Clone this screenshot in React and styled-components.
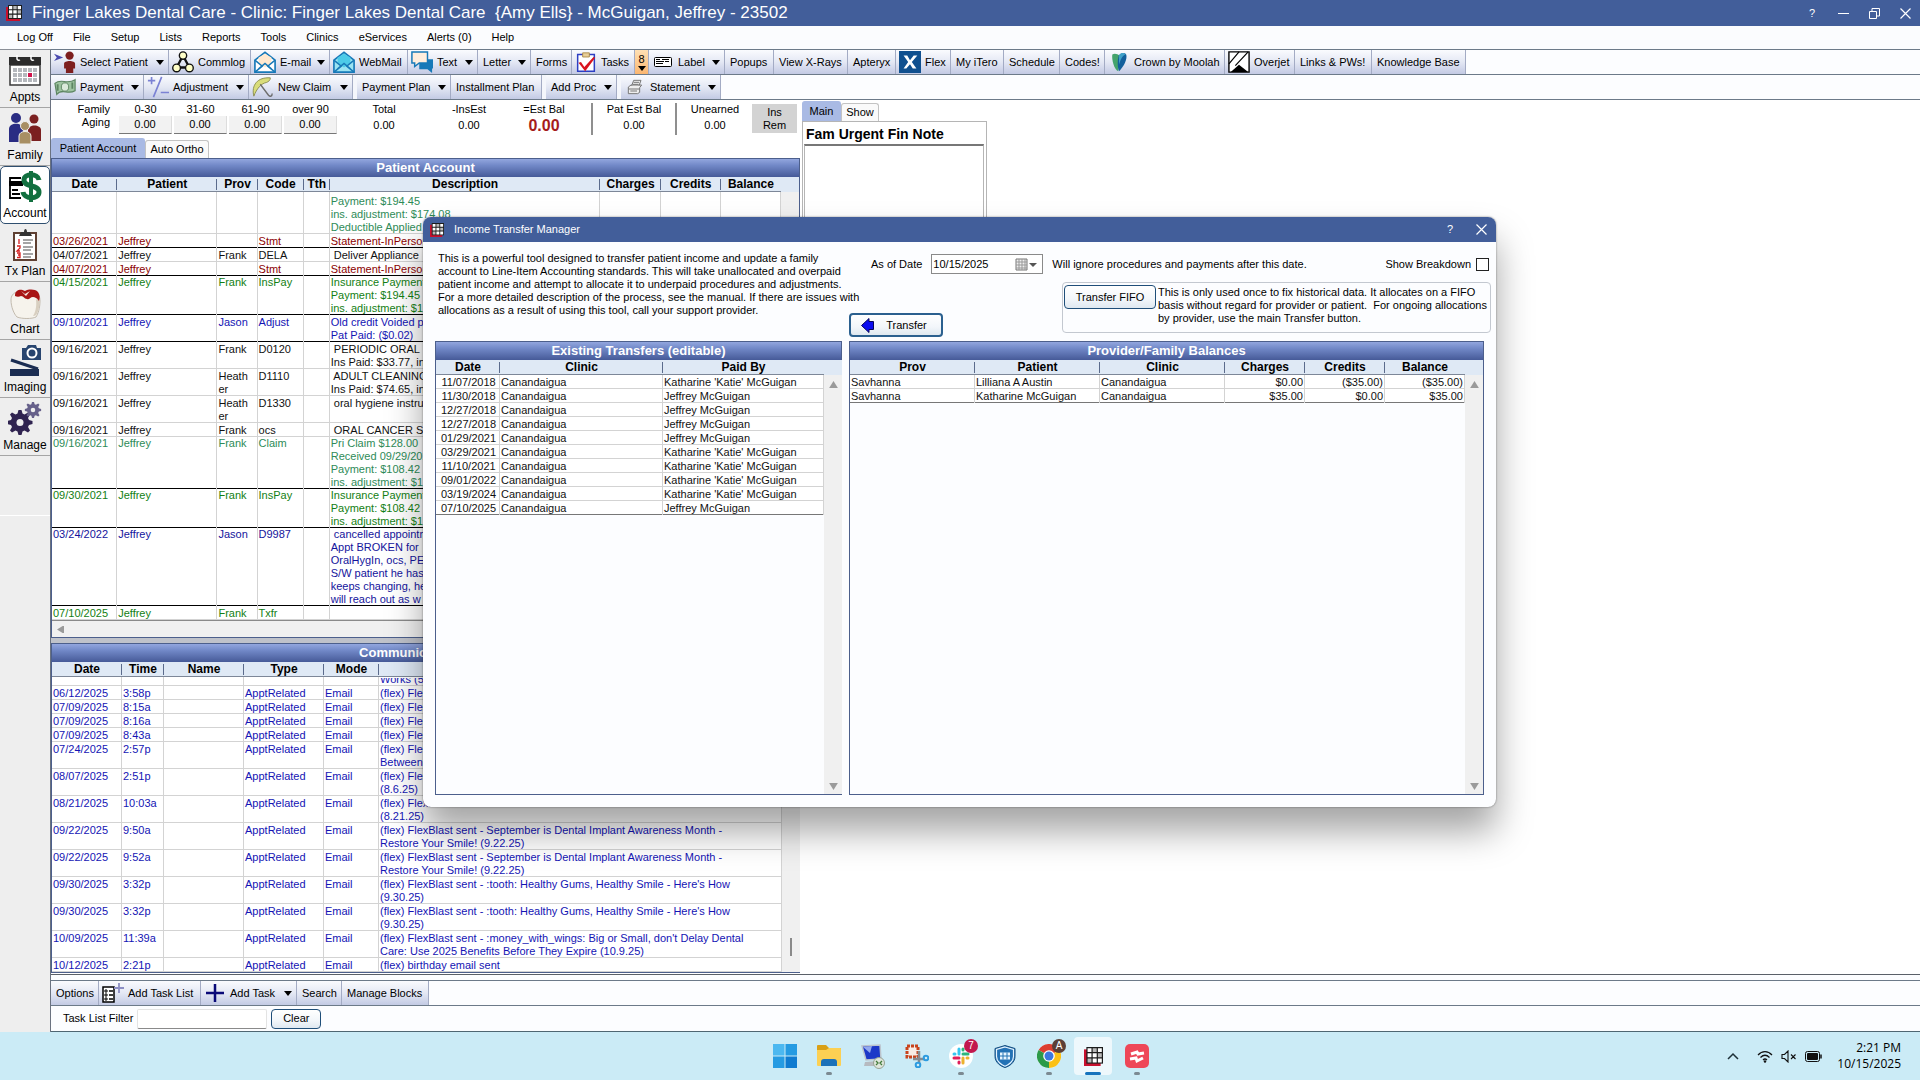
import React from "react";
import styled, { createGlobalStyle } from "styled-components";

const menuItems = [
  "Log Off",
  "File",
  "Setup",
  "Lists",
  "Reports",
  "Tools",
  "Clinics",
  "eServices",
  "Alerts (0)",
  "Help",
];

const DARK_RED = "#8b0000";
const GREEN = "#138013";
const SEA_GREEN = "#2e8b57";
const BLUE = "#1414b4";
const NAVY = "#14149c";

const accountColumns = [
  ["Date", 65],
  ["Patient", 100],
  ["Prov", 40],
  ["Code", 46],
  ["Tth", 26],
  ["Description", 270],
  ["Charges", 60],
  ["Credits", 60],
  ["Balance", 60],
];

const accountRows = [
  { date: "03/26/2021", code: "Stmt", text: ["Statement-InPerson"], color: DARK_RED, last: true },
  { date: "04/07/2021", prov: "Frank", code: "DELA", text: [" Deliver Appliance"] },
  { date: "04/07/2021", code: "Stmt", text: ["Statement-InPerson"], color: DARK_RED, last: true },
  {
    date: "04/15/2021",
    prov: "Frank",
    code: "InsPay",
    text: ["Insurance Payment", "Payment: $194.45", "ins. adjustment: $174.08"],
    color: GREEN,
    last: true,
  },
  {
    date: "09/10/2021",
    prov: "Jason",
    code: "Adjust",
    text: ["Old credit Voided p", "Pat Paid: ($0.02)"],
    color: BLUE,
    last: true,
  },
  { date: "09/16/2021", prov: "Frank", code: "D0120", text: [" PERIODIC ORAL", "Ins Paid: $33.77, ins"] },
  { date: "09/16/2021", prov: "Heather", code: "D1110", text: [" ADULT CLEANING", "Ins Paid: $74.65, ins"] },
  { date: "09/16/2021", prov: "Heather", code: "D1330", text: [" oral hygiene instructions", ""] },
  { date: "09/16/2021", prov: "Frank", code: "ocs", text: [" ORAL CANCER S"] },
  {
    date: "09/16/2021",
    prov: "Frank",
    code: "Claim",
    text: ["Pri Claim $128.00", "Received 09/29/2021", "Payment: $108.42", "ins. adjustment: $19"],
    color: SEA_GREEN,
    last: true,
  },
  {
    date: "09/30/2021",
    prov: "Frank",
    code: "InsPay",
    text: ["Insurance Payment", "Payment: $108.42", "ins. adjustment: $19"],
    color: GREEN,
    last: true,
  },
  {
    date: "03/24/2022",
    prov: "Jason",
    code: "D9987",
    text: [
      " cancelled appointment",
      "Appt BROKEN for",
      "OralHygIn, ocs, PE",
      "S/W patient he has",
      "keeps changing, he",
      "will reach out as w",
    ],
    color: NAVY,
    last: true,
  },
  { date: "07/10/2025", prov: "Frank", code: "Txfr", text: [""], color: GREEN },
];

const commColumns = [
  ["Date", 70],
  ["Time", 42],
  ["Name", 80],
  ["Type", 80],
  ["Mode", 55],
  ["", 403],
];

const commRows = [
  ["06/12/2025", "3:58p", ["(flex) FlexBlast sent"]],
  ["07/09/2025", "8:15a", ["(flex) FlexBlast sent"]],
  ["07/09/2025", "8:16a", ["(flex) FlexBlast sent"]],
  ["07/09/2025", "8:43a", ["(flex) FlexBlast sent"]],
  ["07/24/2025", "2:57p", ["(flex) FlexBlast sent", "Between"]],
  ["08/07/2025", "2:51p", ["(flex) FlexBlast sent", "(8.6.25)"]],
  ["08/21/2025", "10:03a", ["(flex) FlexBlast sent", "(8.21.25)"]],
  ["09/22/2025", "9:50a", ["(flex) FlexBlast sent - September is Dental Implant Awareness Month -", "Restore Your Smile! (9.22.25)"]],
  ["09/22/2025", "9:52a", ["(flex) FlexBlast sent - September is Dental Implant Awareness Month -", "Restore Your Smile! (9.22.25)"]],
  ["09/30/2025", "3:32p", ["(flex) FlexBlast sent - :tooth: Healthy Gums, Healthy Smile - Here's How", "(9.30.25)"]],
  ["09/30/2025", "3:32p", ["(flex) FlexBlast sent - :tooth: Healthy Gums, Healthy Smile - Here's How", "(9.30.25)"]],
  ["10/09/2025", "11:39a", ["(flex) FlexBlast sent - :money_with_wings: Big or Small, don't Delay Dental", "Care: Use 2025 Benefits Before They Expire (10.9.25)"]],
  ["10/12/2025", "2:21p", ["(flex) birthday email sent"]],
];

const transferColumns = [
  ["Date", 64],
  ["Clinic", 163],
  ["Paid By", 161],
];

const KATIE = "Katharine 'Katie' McGuigan";
const JEFFREY = "Jeffrey McGuigan";

const transferRows = [
  ["11/07/2018", KATIE],
  ["11/30/2018", JEFFREY],
  ["12/27/2018", JEFFREY],
  ["12/27/2018", JEFFREY],
  ["01/29/2021", JEFFREY],
  ["03/29/2021", KATIE],
  ["11/10/2021", KATIE],
  ["09/01/2022", KATIE],
  ["03/19/2024", KATIE],
  ["07/10/2025", JEFFREY],
];

const balanceColumns = [
  ["Prov", 125],
  ["Patient", 125],
  ["Clinic", 125],
  ["Charges", 80],
  ["Credits", 80],
  ["Balance", 80],
];

const balanceRows = [
  ["Savhanna", "Lilliana A Austin", "Canandaigua", "$0.00", "($35.00)", "($35.00)"],
  ["Savhanna", "Katharine McGuigan", "Canandaigua", "$35.00", "$0.00", "$35.00"],
];

/* ---------- icons ---------- */

const Svg = ({ w = 22, h = 22, box = "0 0 24 24", children }) => (
  <svg width={w} height={h} viewBox={box} fill="none" aria-hidden="true">
    {children}
  </svg>
);

const LogoIcon = ({ size = 16 }) => (
  <Svg w={size} h={size} box="0 0 16 16">
    <path d="M0 2h14v14H0z" fill="#c8102e" />
    <path d="M2 0h14v14H2z" fill="#1c1c1c" />
    <path d="M3 1h3.300v3.300H3zM11.700 1H15v3.300h-3.300zM3 5.300h3.300v3.300H3zM7.300 5.300h3.400v3.300H7.300zM11.700 9.700H15V13h-3.300zM7.300 9.700h3.400V13H7.300z" fill="#fff" />
    <path d="M7.300 1h3.400v3.300H7.300zM11.700 5.300H15v3.300h-3.300zM3 9.700h3.300V13H3z" fill="#b9b9b9" />
  </Svg>
);

const CaretIcon = () => (
  <Svg w={8} h={5} box="0 0 8 5">
    <path d="M0 0h8L4 5z" fill="#000" />
  </Svg>
);

const SelectPatientIcon = () => (
  <Svg>
    <path d="M0 3l10 4-10 4 3-4z" fill="#4a4ab0" />
    <circle cx="17" cy="5" r="4.500" fill="#7d1f1f" />
    <path d="M11 14c0-4 12-4 12 0v5h-2v5h-8v-5h-2z" fill="#7d1f1f" />
  </Svg>
);

const CommlogIcon = () => (
  <Svg>
    <path d="M12 5L5 18h14z" stroke="#111" strokeWidth="2.500" />
    <circle cx="12" cy="5" r="4" fill="#ffffc8" stroke="#111" strokeWidth="1.500" />
    <circle cx="5" cy="18.500" r="4.200" fill="#ffffc8" stroke="#111" strokeWidth="1.500" />
    <circle cx="19" cy="18.500" r="4.200" fill="#ffffc8" stroke="#111" strokeWidth="1.500" />
  </Svg>
);

const EnvelopeIcon = ({ fill = "#ffe9cf", back = "#fff" }) => (
  <Svg>
    <path d="M1 10L12 1.500 23 10v13H1z" fill={back} stroke="#1779b8" strokeWidth="1.800" />
    <path d="M5 7l7-4 7 4v6l-7 5-7-5z" fill={fill} />
    <path d="M1 10l8 6.500L1 23M23 10l-8 6.500 8 6.500M5 19.500l7-6 7 6" stroke="#1779b8" strokeWidth="1.600" />
  </Svg>
);

const TextIcon = () => (
  <Svg>
    <path d="M9 9h15v10h-1v5l-5-4H9z" fill="#1779b8" />
    <path d="M1 1h17v12H9l-5 4v-4H1z" fill="#ffeedd" stroke="#1779b8" strokeWidth="1.600" />
  </Svg>
);

const TasksIcon = () => (
  <Svg w={20}>
    <path d="M2 3h20v20H2z" fill="#fff" stroke="#2d3fc4" strokeWidth="1.800" />
    <path d="M8 1h8v5H8z" fill="#e8cf9a" stroke="#a5823c" />
    <path d="M3 13l3-1 4 6L21 6l2 1-12 16z" fill="#d9141e" />
  </Svg>
);

const LabelIcon = () => (
  <Svg w={18} h={10} box="0 0 18 10">
    <rect x="0.500" y="0.500" width="17" height="9" rx="1" fill="#fff" stroke="#000" />
    <path d="M2 2.500h4M8 2.500h7M2 4.500h8M11 4.500h4M2 6.500h7" stroke="#000" />
  </Svg>
);

const FlexIcon = () => (
  <Svg>
    <path d="M0 0h24v24H0z" fill="#10508f" />
    <path d="M5 5h4l3 5 4-5h4l-6 7 5 7h-4l-3-4.500L8 19H5l5-7z" fill="#fff" />
  </Svg>
);

const CrownIcon = () => (
  <Svg w={20}>
    <path d="M4 3c3-2 7 0 8 1 0 8 0 13-1 19-5-2-8-14-7-20z" fill="#44a36c" />
    <path d="M12 4c3-4 9-4 9 1 0 7-5 14-9 18-2-5-2-14 0-19z" fill="#125f9c" />
    <path d="M12 4c3-4 7-3 8-1-4 1-6 6-8 12z" fill="#3fa0c8" />
  </Svg>
);

const OverjetIcon = () => (
  <Svg>
    <path d="M1 1h22v22H1z" fill="#fff" stroke="#000" strokeWidth="1.500" />
    <path d="M1 14L12 1M8 16L22 1" stroke="#000" strokeWidth="1.300" />
    <path d="M3 23l9-8 10 8z" fill="#000" />
  </Svg>
);

const MoneyIcon = () => (
  <Svg>
    <path d="M1 8c7-6 13 2 22-4v12c-8 5-14-3-20 4z" fill="#9dc3a0" stroke="#5c8561" strokeWidth="1.300" />
    <ellipse cx="12" cy="12" rx="4" ry="4.500" fill="#dbeadb" stroke="#5c8561" />
    <path d="M4 9v7M20 7v7" stroke="#5c8561" strokeWidth="2" />
  </Svg>
);

const PlusMinusIcon = () => (
  <Svg>
    <path d="M1 5h8M5 1v8M16 1L7 23M15 18h9" stroke="#7b82d4" strokeWidth="1.800" />
  </Svg>
);

const UmbrellaIcon = () => (
  <Svg>
    <path d="M2 22C-1 10 6 1 20 2c0 3-2 4-4 5-6 1-11 7-14 15z" fill="#d9dd7a" stroke="#8a8c50" />
    <path d="M9 9l9 12c2 2 4 1 4-2" stroke="#6d6d6d" strokeWidth="1.500" />
  </Svg>
);

const PrinterIcon = () => (
  <Svg w={18} h={16}>
    <path d="M7 10l3-8h11l-3 8M2 12l4-3h16l-3 4v7l-3 2H2z" fill="#eee" stroke="#777" strokeWidth="1.500" />
    <path d="M10 5h8M9 8h8M2 15h17M5 18h10" stroke="#777" strokeWidth="1.500" />
  </Svg>
);

const TaskListIcon = () => (
  <Svg w={22} h={20} box="0 0 22 20">
    <path d="M1 4h11v15H1z" fill="#fff" stroke="#000" strokeWidth="1.500" />
    <path d="M3 7h2v2H3zM3 11h2v2H3zM3 15h2v2H3z" stroke="#000" />
    <path d="M7 8h4M7 12h4M7 16h4" stroke="#000" strokeWidth="1.300" />
    <path d="M12 5h10M17 0v10" stroke="#8d8fc4" strokeWidth="1.800" />
  </Svg>
);

const AddIcon = () => (
  <Svg w={18} h={18} box="0 0 18 18">
    <path d="M0 9h18M9 0v18" stroke="#0a0a78" strokeWidth="2.500" />
  </Svg>
);

const ApptsIcon = () => (
  <Svg w={34} h={34} box="0 0 34 34">
    <path d="M2 11h30v20H2z" fill="#fff" stroke="#3a3a3a" strokeWidth="1.500" />
    <path d="M1 3h32v8H1z" fill="#2b2b2b" />
    <path d="M9 1v4a2 2 0 003 1M23 1v4a2 2 0 003 1" stroke="#fff" strokeWidth="1.500" />
    {[14, 19, 24].map((y) =>
      [5, 10, 15, 20, 25].map((x) => (
        <path key={`${x}-${y}`} d={`M${x} ${y}h4v4h-4z`} fill={x === 20 && y === 19 ? "#d1124b" : "#b5b8bd"} />
      ))
    )}
  </Svg>
);

const FamilyIcon = () => (
  <Svg w={34} h={34} box="0 0 34 34">
    <circle cx="8" cy="6" r="5" fill="#2a2c83" />
    <path d="M1 30V17c0-7 14-7 14 0v13z" fill="#2a2c83" />
    <circle cx="26" cy="7" r="4.500" fill="#7b2020" />
    <path d="M20 29V18c0-6 13-6 13 0v11z" fill="#7b2020" />
    <circle cx="17" cy="14" r="4.500" fill="#a88f63" stroke="#eee" />
    <path d="M11 32v-8c0-6 12-6 12 0v8z" fill="#a88f63" stroke="#eee" />
  </Svg>
);

const AccountIcon = () => (
  <Svg w={34} h={34} box="0 0 34 34">
    <path d="M1 11h14v5H1z" fill="#000" />
    <path d="M13 8H2v20h11M4 20h6M4 24h8" stroke="#000" strokeWidth="1.800" />
    <path d="M31 10c-1-7-15-7-15 0 0 8 15 4 15 12 0 8-15 7-16 0" stroke="#11703f" strokeWidth="5" />
    <path d="M23 1v31" stroke="#11703f" strokeWidth="4" />
  </Svg>
);

const TxPlanIcon = () => (
  <Svg w={34} h={34} box="0 0 34 34">
    <path d="M6 5h22v27H6z" fill="#fff" stroke="#5f4032" strokeWidth="2" />
    <path d="M11 8l2-4h3c0-4 3-4 3 0h3l2 4z" fill="#333" />
    <path d="M15 12h10M15 15h8M15 19h10M15 22h8M15 26h10M15 29h8" stroke="#888" strokeWidth="1.500" />
    <path d="M11 11v5M9 18h3v2l-3 3h3M9 25h3v4.500H9M10 27h2" stroke="#d61c1c" strokeWidth="1.300" />
  </Svg>
);

const ChartIcon = () => (
  <Svg w={34} h={34} box="0 0 34 34">
    <path d="M3 14c0-4 2-7 6-8h18c4 2 5 5 5 9 0 7-2 13-4 16-4 2-14 2-19 0-3-3-6-10-6-17z" fill="#f6f3ec" stroke="#c3bbae" />
    <path d="M28 14c1 7-1 13-3 16 3 0 4-2 5-5 2-5 2-10 1-14z" fill="#d8cfc0" />
    <path d="M9 5c3-2 5-1 8 0 4-2 10-2 13 1 2 3 2 6 1 9-2-3-4-4-6-4-3 0-3 3-6 2-3 0-3-3-6-3-2 1-4 1-6 0 0-2 0-4 2-5z" fill="#a81414" />
    <path d="M13 5l4 3 5-3-4 5z" fill="#f3e4dc" />
  </Svg>
);

const ImagingIcon = () => (
  <Svg w={34} h={34} box="0 0 34 34">
    <path d="M14 4h4l2-3h8l1 3h4v12H14z" fill="#28456f" />
    <circle cx="24" cy="9" r="4.500" fill="#28456f" stroke="#fff" strokeWidth="2" />
    <path d="M3 16l27 9" stroke="#1b2d52" strokeWidth="3" />
    <path d="M2 25h29v7H2z" fill="#1b2d52" />
  </Svg>
);

const gear = "M-1.500-11h3l1 3.500 2 1 3.500-2 2 2-2 3.500 1 2 3.500 1v3l-3.500 1-1 2 2 3.500-2 2-3.500-2-2 1-1 3.500h-3l-1-3.500-2-1-3.500 2-2-2 2-3.500-1-2-3.500-1v-3l3.500-1 1-2-2-3.500 2-2 3.500 2 2-1z";

const ManageIcon = () => (
  <Svg w={34} h={34} box="0 0 34 34">
    <g transform="translate(12 19)">
      <path d={gear} fill="#2f2350" />
      <circle cy="1.500" r="3.500" fill="#eee" />
    </g>
    <g transform="translate(25 7) scale(0.650)">
      <path d={gear} fill="#66608a" />
      <circle cy="1.500" r="3.500" fill="#eee" />
    </g>
  </Svg>
);

const CalendarIcon = () => (
  <Svg w={22} h={13} box="0 0 22 13">
    <path d="M1 1h11v11H1z" fill="#eee" stroke="#777" />
    <path d="M1 4h11M1 7h11M1 10h11M4 1v11M7 1v11M10 1v11" stroke="#999" />
    <path d="M14 5h8l-4 4z" fill="#555" />
  </Svg>
);

const ArrowLeftIcon = () => (
  <Svg w={13} h={15} box="0 0 13 15">
    <path d="M0.500 7.500L8 0.500v3h4.500v8H8v3z" fill="#0c0cf0" stroke="#06065c" />
  </Svg>
);

const TriangleIcon = ({ turn = 0 }) => (
  <Svg w={9} h={7} box="0 0 10 8">
    <path d="M5 0l5 8H0z" fill="#9a9a9a" transform={`rotate(${turn} 5 4)`} />
  </Svg>
);

const MinimizeIcon = () => (
  <Svg w={11} h={11} box="0 0 11 11">
    <path d="M0 5.500h11" stroke="#fff" />
  </Svg>
);

const RestoreIcon = () => (
  <Svg w={11} h={11} box="0 0 11 11">
    <path d="M0.500 3.500h7v7h-7zM3 3V0.500h7.500V8H8" stroke="#fff" />
  </Svg>
);

const CloseIcon = () => (
  <Svg w={11} h={11} box="0 0 11 11">
    <path d="M0.500 0.500l10 10M10.500 0.500l-10 10" stroke="#fff" strokeWidth="1.200" />
  </Svg>
);

const WindowsIcon = () => (
  <Svg w={24} h={24}>
    <path d="M0 0h11.500v11.500H0z" fill="#4cb8f0" />
    <path d="M12.500 0H24v11.500H12.500zM0 12.500h11.500V24H0z" fill="#259be2" />
    <path d="M12.500 12.500H24V24H12.500z" fill="#0f7bd0" />
  </Svg>
);

const ExplorerIcon = () => (
  <Svg w={26} h={24} box="0 0 26 24">
    <path d="M1 2a1 1 0 011-1h8l3 3h11a1 1 0 011 1v5H1z" fill="#d9a016" />
    <path d="M1 6h9l3-2h11a1 1 0 011 1v16a1 1 0 01-1 1H2a1 1 0 01-1-1z" fill="#fcd053" />
    <path d="M5 22v-4a3 3 0 013-3h10a3 3 0 013 3v4z" fill="#1c71b8" />
  </Svg>
);

const RemoteIcon = () => (
  <Svg w={26} h={26} box="0 0 26 26">
    <path d="M2 3l18-1 1 14-15 1z" fill="#1c38c8" stroke="#bcc4cc" strokeWidth="1.500" />
    <path d="M3 4l9-1-2 7z" fill="#93a9ee" />
    <path d="M5 19l12-1 2 5H4z" fill="#b6bac0" />
    <circle cx="19" cy="20" r="5.500" fill="#dfe6dc" stroke="#97a294" />
    <path d="M16 18l2 2-2 2M22 18l-2 2 2 2" stroke="#427a3a" strokeWidth="1.300" />
  </Svg>
);

const SnipIcon = () => (
  <Svg w={24} h={24}>
    <path d="M2 2h11v11H2z" fill="#f7ece6" stroke="#c8431c" strokeWidth="3" strokeDasharray="3 1" />
    <path d="M14 7v12M8 15h12" stroke="#848a90" strokeWidth="2.500" />
    <circle cx="13" cy="21" r="2.300" stroke="#2c9be0" strokeWidth="2" />
    <circle cx="21" cy="14" r="2.300" stroke="#2c9be0" strokeWidth="2" />
  </Svg>
);

const SlackIcon = () => (
  <Svg w={24} h={24}>
    <circle cx="12" cy="12" r="12" fill="#fff" />
    <g strokeWidth="3" strokeLinecap="round">
      <path d="M10 5v5M5 10h1" stroke="#36c5f0" />
      <path d="M14 10h5M14 5v1" stroke="#2eb67d" />
      <path d="M14 14v5M18 14h1" stroke="#ecb22e" />
      <path d="M5 14h5M10 18v1" stroke="#e01e5a" />
    </g>
  </Svg>
);

const ShieldIcon = () => (
  <Svg w={24} h={25}>
    <path d="M12 1l10 3v8c0 6-6 10-10 11C8 22 2 18 2 12V4z" fill="#2372b5" stroke="#174f80" />
    <path d="M12 2.500l8.500 2.500v7c0 5-5 8.500-8.500 9.700C8.500 20.500 3.500 17 3.500 12V5z" stroke="#e8f5ff" strokeWidth="1.200" />
    <path d="M7 8h10v7H7z" fill="#e8f5ff" />
    <path d="M10 8v7M14 8v7M7 11.500h10" stroke="#2372b5" />
  </Svg>
);

const ChromeIcon = () => (
  <Svg w={24} h={24}>
    <circle cx="12" cy="12" r="12" fill="#fff" />
    <path d="M12 12L1.600 6A12 12 0 0122.400 6z" fill="#dc3e30" />
    <path d="M12 12L22.400 6A12 12 0 0112 24z" fill="#fbc116" />
    <path d="M12 12v12A12 12 0 011.600 6z" fill="#2c9a48" />
    <circle cx="12" cy="12" r="5.800" fill="#fff" />
    <circle cx="12" cy="12" r="4.500" fill="#3c78e0" />
  </Svg>
);

const RedAppIcon = () => (
  <Svg w={24} h={24}>
    <rect width="24" height="24" rx="5" fill="#ee4758" />
    <path d="M6 10l6-2 1 2 6-1M5 15l6-1 1 3 6-3" stroke="#fff" strokeWidth="3" />
  </Svg>
);

const ChevronUpIcon = () => (
  <Svg w={12} h={8} box="0 0 12 8">
    <path d="M1 7l5-5 5 5" stroke="#1d3038" strokeWidth="1.500" />
  </Svg>
);

const WifiIcon = () => (
  <Svg w={16} h={13} box="0 0 16 13">
    <path d="M1 5c4-4.500 10-4.500 14 0M3.500 7.500c3-3 6-3 9 0M6 10c1.500-1.500 2.500-1.500 4 0" stroke="#111" strokeWidth="1.200" />
    <circle cx="8" cy="11.500" r="1.200" fill="#111" />
  </Svg>
);

const MuteIcon = () => (
  <Svg w={16} h={13} box="0 0 16 13">
    <path d="M1 4.500h2.500L7 1v11L3.500 8.500H1zM10 4.500l4.500 4.500M14.500 4.500L10 9" stroke="#111" strokeWidth="1.100" />
  </Svg>
);

const BatteryIcon = () => (
  <Svg w={17} h={11} box="0 0 17 11">
    <rect x="0.500" y="0.500" width="14" height="10" rx="2" stroke="#111" />
    <rect x="2" y="2" width="11" height="7" rx="1" fill="#111" />
    <path d="M16 3.500v4" stroke="#111" strokeWidth="1.500" />
  </Svg>
);

/* ---------- data for bars ---------- */

const topTools = [
  { label: "Select Patient", w: 118, icon: <SelectPatientIcon />, caret: true },
  { label: "Commlog", w: 82, icon: <CommlogIcon /> },
  { label: "E-mail", w: 79, icon: <EnvelopeIcon />, caret: true },
  { label: "WebMail", w: 78, icon: <EnvelopeIcon fill="#4ccbe8" back="#9be4f2" /> },
  { label: "Text", w: 70, icon: <TextIcon />, caret: true },
  { label: "Letter", w: 53, caret: true },
  { label: "Forms", w: 41 },
  { label: "Tasks", w: 63, icon: <TasksIcon /> },
  { label: "8", w: 14, count: true },
  { label: "Label", w: 76, icon: <LabelIcon />, caret: true },
  { label: "Popups", w: 49 },
  { label: "View X-Rays", w: 74 },
  { label: "Apteryx", w: 48 },
  { label: "Flex", w: 55, icon: <FlexIcon /> },
  { label: "My iTero", w: 53 },
  { label: "Schedule", w: 56 },
  { label: "Codes!", w: 45 },
  { label: "Crown by Moolah", w: 120, icon: <CrownIcon /> },
  { label: "Overjet", w: 70, icon: <OverjetIcon /> },
  { label: "Links & PWs!", w: 77 },
  { label: "Knowledge Base", w: 94 },
];

const accountTools = [
  { label: "Payment", w: 93, icon: <MoneyIcon />, caret: true },
  { label: "Adjustment", w: 105, icon: <PlusMinusIcon />, caret: true },
  { label: "New Claim", w: 104, icon: <UmbrellaIcon />, caret: true },
  { label: "Payment Plan", w: 98, caret: true, gap: true },
  { label: "Installment Plan", w: 91 },
  { label: "Add Proc", w: 75, caret: true, gap: true },
  { label: "Statement", w: 104, icon: <PrinterIcon />, caret: true, gap: true },
];

const taskTools = [
  { label: "Options", w: 48 },
  { label: "Add Task List", w: 102, icon: <TaskListIcon /> },
  { label: "Add Task", w: 96, icon: <AddIcon />, caret: true },
  { label: "Search", w: 45 },
  { label: "Manage Blocks", w: 87 },
];

const modules = [
  ["Appts", <ApptsIcon />],
  ["Family", <FamilyIcon />],
  ["Account", <AccountIcon />],
  ["Tx Plan", <TxPlanIcon />],
  ["Chart", <ChartIcon />],
  ["Imaging", <ImagingIcon />],
  ["Manage", <ManageIcon />],
];

const taskbarApps = [
  { name: "Start", icon: <WindowsIcon /> },
  { name: "File Explorer", icon: <ExplorerIcon />, open: true },
  { name: "Remote Desktop", icon: <RemoteIcon /> },
  { name: "Snipping Tool", icon: <SnipIcon /> },
  { name: "Slack", icon: <SlackIcon />, open: true, badge: "7", badgeColor: "#c2184e" },
  { name: "Security", icon: <ShieldIcon /> },
  { name: "Chrome", icon: <ChromeIcon />, open: true, badge: "A", badgeColor: "#5c4037" },
  { name: "Open Dental", icon: <LogoIcon size={19} />, open: true, active: true },
  { name: "Recorder", icon: <RedAppIcon />, open: true },
];

/* ---------- small components ---------- */

function ToolItems({ items }) {
  return items.map((item) => (
    <ToolButton key={item.label} $w={item.w} $gap={item.gap} $count={item.count} type="button">
      {item.icon && <IconSlot>{item.icon}</IconSlot>}
      <span>{item.label}</span>
      {(item.caret || item.count) && <CaretIcon />}
    </ToolButton>
  ));
}

function GridTable({ columns, children }) {
  return (
    <Table>
      <colgroup>
        {columns.map(([name, width]) => (
          <Col key={name} $w={width} />
        ))}
      </colgroup>
      <thead>
        <tr>
          {columns.map(([name]) => (
            <th key={name}>{name}</th>
          ))}
        </tr>
      </thead>
      <tbody>{children}</tbody>
    </Table>
  );
}

function Lines({ text }) {
  return text.map((line, i) => <Line key={i}>{line}</Line>);
}

function PatientAccountGrid() {
  return (
    <GridPanel>
      <GridTitle>Patient Account</GridTitle>
      <GridBody>
        <GridTable columns={accountColumns}>
          <Row $color={SEA_GREEN}>
            {accountColumns.map(([name]) => (
              <CutCell key={name} $h={42}>
                {name === "Description" && (
                  <Lines text={["Payment: $194.45", "ins. adjustment: $174.08", "Deductible Applied"]} />
                )}
              </CutCell>
            ))}
          </Row>
          {accountRows.map((row, i) => (
            <Row key={i} $color={row.color} $last={row.last} $tall={row.text.length > 2}>
              <td>{row.date}</td>
              <td>Jeffrey</td>
              <BreakCell>{row.prov}</BreakCell>
              <td>{row.code}</td>
              <td />
              <td>
                <Lines text={row.text} />
              </td>
              <td />
              <td />
              <td />
            </Row>
          ))}
        </GridTable>
        <ScrollTrack />
      </GridBody>
      <BottomScroll>
        <TriangleIcon turn={-90} />
      </BottomScroll>
    </GridPanel>
  );
}

function CommLogGrid() {
  return (
    <GridPanel>
      <GridTitle>Communications Log</GridTitle>
      <GridBody>
        <GridTable columns={commColumns}>
          <Row $color={BLUE}>
            {commColumns.map(([name]) => (
              <CutCell key={name} $h={9}>
                {name === "" && (
                  <Clip>
                    <Line>Works (5.28.25)</Line>
                  </Clip>
                )}
              </CutCell>
            ))}
          </Row>
          {commRows.map(([date, time, text], i) => (
            <Row key={i} $color={BLUE}>
              <td>{date}</td>
              <td>{time}</td>
              <td />
              <td>ApptRelated</td>
              <td>Email</td>
              <td>
                <Lines text={text} />
              </td>
            </Row>
          ))}
        </GridTable>
        <ScrollTrack>
          <Thumb />
        </ScrollTrack>
      </GridBody>
    </GridPanel>
  );
}

function AgingBar() {
  return (
    <Aging>
      <AgingLabel>
        Family
        <br />
        Aging
      </AgingLabel>
      {["0-30", "31-60", "61-90", "over 90"].map((name) => (
        <Figure key={name} $w={55}>
          <span>{name}</span>
          <Boxed>0.00</Boxed>
        </Figure>
      ))}
      <Figure $w={92}>
        <span>Total</span>
        <Amount>0.00</Amount>
      </Figure>
      <Figure $w={78}>
        <span>-InsEst</span>
        <Amount>0.00</Amount>
      </Figure>
      <EstBalance $w={72}>
        <span>=Est Bal</span>
        <Due>0.00</Due>
      </EstBalance>
      <Divider />
      <Figure $w={80}>
        <span>Pat Est Bal</span>
        <Amount>0.00</Amount>
      </Figure>
      <Divider />
      <Figure $w={74}>
        <span>Unearned</span>
        <Amount>0.00</Amount>
      </Figure>
      <InsRem type="button">
        Ins
        <br />
        Rem
      </InsRem>
    </Aging>
  );
}

function TransferDialog() {
  return (
    <Dialog role="dialog" aria-labelledby="transfer-title">
      <DialogBar>
        <LogoIcon size={14} />
        <DialogTitle id="transfer-title">Income Transfer Manager</DialogTitle>
        <BarButton type="button">?</BarButton>
        <BarButton type="button" aria-label="Close">
          <CloseIcon />
        </BarButton>
      </DialogBar>
      <DialogTop>
        <Intro>
          This is a powerful tool designed to transfer patient income and update a family
          <br />
          account to Line-Item Accounting standards. This will take unallocated and overpaid
          <br />
          patient income and attempt to allocate it to underpaid procedures and adjustments.
          <br />
          For a more detailed description of the process, see the manual. If there are issues with
          <br />
          allocations as a result of using this tool, call your support provider.
        </Intro>
        <Options>
          <DateRow>
            <label htmlFor="as-of">As of Date</label>
            <DateBox>
              <input id="as-of" type="text" defaultValue="10/15/2025" />
              <CalendarIcon />
            </DateBox>
            <span>Will ignore procedures and payments after this date.</span>
            <Breakdown>
              Show Breakdown
              <input type="checkbox" />
            </Breakdown>
          </DateRow>
          <ActionRow>
            <TransferButton type="button">
              <ArrowLeftIcon />
              Transfer
            </TransferButton>
            <FifoBox>
              <FifoButton type="button">Transfer FIFO</FifoButton>
              <FifoText>
                This is only used once to fix historical data. It allocates on a FIFO
                <br />
                basis without regard for provider or patient.&nbsp; For ongoing allocations
                <br />
                by provider, use the main Transfer button.
              </FifoText>
            </FifoBox>
          </ActionRow>
        </Options>
      </DialogTop>
      <DialogGrids>
        <GridPanel $w={407}>
          <GridTitle>Existing Transfers (editable)</GridTitle>
          <GridBody $h={434}>
            <GridTable columns={transferColumns}>
              {transferRows.map(([date, name], i) => (
                <Row key={i} $end={i === transferRows.length - 1}>
                  <CenterCell>{date}</CenterCell>
                  <td>Canandaigua</td>
                  <td>{name}</td>
                </Row>
              ))}
            </GridTable>
            <ScrollTrack>
              <TriangleIcon />
              <TriangleIcon turn={180} />
            </ScrollTrack>
          </GridBody>
        </GridPanel>
        <GridPanel $grow>
          <GridTitle>Provider/Family Balances</GridTitle>
          <GridBody $h={434}>
            <GridTable columns={balanceColumns}>
              {balanceRows.map((row, i) => (
                <Row key={i} $end={i === balanceRows.length - 1}>
                  {row.map((cell, c) => (c > 2 ? <MoneyCell key={c}>{cell}</MoneyCell> : <td key={c}>{cell}</td>))}
                </Row>
              ))}
            </GridTable>
            <ScrollTrack>
              <TriangleIcon />
              <TriangleIcon turn={180} />
            </ScrollTrack>
          </GridBody>
        </GridPanel>
      </DialogGrids>
    </Dialog>
  );
}

function Taskbar() {
  return (
    <TaskbarWrap>
      <Apps>
        {taskbarApps.map((app) => (
          <AppButton key={app.name} type="button" aria-label={app.name} $active={app.active} $open={app.open}>
            {app.icon}
            {app.badge && <Badge $color={app.badgeColor}>{app.badge}</Badge>}
          </AppButton>
        ))}
      </Apps>
      <Tray>
        <ChevronUpIcon />
        <TrayIcons>
          <WifiIcon />
          <MuteIcon />
          <BatteryIcon />
        </TrayIcons>
        <Clock>
          2:21 PM
          <br />
          10/15/2025
        </Clock>
      </Tray>
    </TaskbarWrap>
  );
}

function App() {
  return (
    <Screen>
      <GlobalStyle />
      <TitleBar>
        <LogoIcon />
        <h1>Finger Lakes Dental Care - Clinic: Finger Lakes Dental Care&nbsp; {"{Amy Ells}"} - McGuigan, Jeffrey - 23502</h1>
        <BarButton type="button">?</BarButton>
        <BarButton type="button" aria-label="Minimize">
          <MinimizeIcon />
        </BarButton>
        <BarButton type="button" aria-label="Restore">
          <RestoreIcon />
        </BarButton>
        <BarButton type="button" aria-label="Close">
          <CloseIcon />
        </BarButton>
      </TitleBar>
      <MenuBar>
        {menuItems.map((item) => (
          <button key={item} type="button">
            {item}
          </button>
        ))}
      </MenuBar>

      <Main>
        <Sidebar>
          {modules.map(([name, icon]) => (
            <ModuleButton key={name} type="button" $active={name === "Account"}>
              {icon}
              {name}
            </ModuleButton>
          ))}
          <SidebarEnd />
        </Sidebar>

        <Workspace>
          <ToolBar>
            <ToolItems items={topTools} />
          </ToolBar>
          <ToolBar>
            <ToolItems items={accountTools} />
          </ToolBar>

          <Content>
            <AccountColumn>
              <AgingBar />
              <Tabs>
                <Tab type="button" $active $w={94}>
                  Patient Account
                </Tab>
                <Tab type="button" $w={64}>
                  Auto Ortho
                </Tab>
              </Tabs>
              <PatientAccountGrid />
              <Splitter />
              <CommLogGrid />
            </AccountColumn>
            <NoteColumn>
              <Tabs>
                <Tab type="button" $active $w={39}>
                  Main
                </Tab>
                <Tab type="button" $w={38}>
                  Show
                </Tab>
              </Tabs>
              <NotePanel>
                <label htmlFor="fin-note">Fam Urgent Fin Note</label>
                <textarea id="fin-note" />
              </NotePanel>
            </NoteColumn>
          </Content>

          <TaskPanel>
            <ToolBar>
              <ToolItems items={taskTools} />
            </ToolBar>
            <FilterRow>
              <label htmlFor="task-filter">Task List Filter</label>
              <input id="task-filter" type="text" />
              <ClearButton type="button">Clear</ClearButton>
            </FilterRow>
          </TaskPanel>
        </Workspace>
      </Main>

      <Taskbar />
      <TransferDialog />
    </Screen>
  );
}

/* ---------- styles ---------- */

const GlobalStyle = createGlobalStyle`
  * {
    box-sizing: border-box;
  }

  body {
    margin: 0;
    background: #fff;
    color: #000;
    font-family: "Liberation Sans", Arial, sans-serif;
    font-size: 11px;
    line-height: 13px;
  }

  button,
  input,
  textarea {
    font: inherit;
    color: inherit;
  }

  button {
    padding: 0;
    border: 0;
    background: none;
    white-space: nowrap;
  }

  svg {
    flex: none;
    display: block;
  }
`;

const Screen = styled.div`
  position: relative;
  display: flex;
  flex-direction: column;
  min-height: 100vh;
  overflow: hidden;
`;

const TitleBar = styled.header`
  display: flex;
  align-items: center;
  height: 26px;
  padding: 0 4px 0 6px;
  background: #425e9a;
  color: #fff;

  h1 {
    flex: 1;
    margin: 0 0 0 10px;
    font-size: 17px;
    font-weight: 400;
    line-height: 20px;
  }
`;

const BarButton = styled.button`
  display: flex;
  align-items: center;
  justify-content: center;
  width: 22px;
  height: 20px;
  margin-left: 9px;
  color: #fff;
`;

const MenuBar = styled.nav`
  display: flex;
  gap: 20px;
  height: 23px;
  padding-left: 17px;
  background: #fbfcfe;
`;

const Main = styled.main`
  flex: 1;
  display: flex;
`;

const Sidebar = styled.aside`
  width: 51px;
  flex: none;
  border-top: 1px solid #8b9098;
  border-right: 1px solid #6a7280;
  background: #eee;
`;

const ModuleButton = styled.button`
  display: flex;
  flex-direction: column;
  align-items: center;
  gap: 2px;
  width: 50px;
  height: 58px;
  padding-top: 4px;
  border-bottom: 1px solid #a5a5a5;
  font-size: 12px;
  line-height: 15px;
  ${({ $active }) =>
    $active &&
    `
    background: #fff;
    border: 1px solid #2f4f6f;
    border-radius: 5px;
    padding-top: 3px;
  `}
`;

const SidebarEnd = styled.div`
  height: 60px;
  border-bottom: 1px solid #fff;
`;

const Workspace = styled.div`
  flex: 1;
  min-width: 0;
  display: flex;
  flex-direction: column;
`;

const ToolBar = styled.div`
  display: flex;
  height: 25px;
  border-top: 1px solid #6c7a89;
  background: #fcfdff;
`;

const ToolButton = styled.button`
  display: flex;
  align-items: center;
  flex: none;
  width: ${({ $w }) => $w}px;
  padding: 0 4px 0 3px;
  border-right: 1px solid #a3abc4;
  border-left: ${({ $gap }) => ($gap ? "4px solid #f4f6fb" : "0")};
  background: linear-gradient(#fafbfe, #e4e8f4 50%, #c3cae4);

  span {
    flex: 1;
    text-align: left;
    padding-left: 2px;
  }

  ${({ $count }) =>
    $count &&
    `
    flex-direction: column;
    padding: 3px 2px;
    background: linear-gradient(#ffe0b4, #fbb670);

    span {
      padding: 0;
    }
  `}
`;

const IconSlot = styled.i`
  display: flex;
  align-items: center;
  justify-content: center;
  min-width: 22px;
  margin-right: 2px;
`;

const Content = styled.div`
  flex: 1;
  display: flex;
  border-top: 1px solid #6c7a89;
`;

const AccountColumn = styled.div`
  width: 749px;
  flex: none;
`;

const Aging = styled.section`
  display: flex;
  height: 38px;
  padding-top: 3px;
`;

const AgingLabel = styled.div`
  width: 67px;
  padding-right: 8px;
  text-align: right;
`;

const Figure = styled.div`
  display: flex;
  flex-direction: column;
  align-items: center;
  width: ${({ $w }) => $w}px;
`;

const EstBalance = styled(Figure)`
  margin-right: 10px;
`;

const Boxed = styled.span`
  width: 53px;
  height: 18px;
  border-right: 1px solid #ddd;
  border-bottom: 1px solid #777;
  background: #f2f2f2;
  line-height: 17px;
  text-align: center;
`;

const Amount = styled.span`
  line-height: 19px;
`;

const Due = styled.strong`
  color: #a61c1c;
  font-size: 16px;
  line-height: 19px;
`;

const Divider = styled.div`
  width: 2px;
  height: 32px;
  margin: 0 1px;
  background: #8f8f8f;
`;

const InsRem = styled.button`
  width: 45px;
  height: 29px;
  margin-top: 1px;
  background: #d3d3d3;
`;

const Tabs = styled.div`
  display: flex;
  align-items: flex-end;
  height: 20px;
`;

const Tab = styled.button`
  width: ${({ $w }) => $w}px;
  height: ${({ $active }) => ($active ? 20 : 18)}px;
  border: 1px solid ${({ $active }) => ($active ? "#a9bae4" : "#c3c3c3")};
  border-bottom: 0;
  border-radius: 3px 3px 0 0;
  background: ${({ $active }) => ($active ? "#a9bae4" : "#fafafa")};
`;

const GridPanel = styled.section`
  border: 1px solid #4c5f8c;
  background: #fcfdff;
  ${({ $w }) => $w && `width: ${$w}px;`}
  ${({ $grow }) => $grow && "flex: 1;"}
`;

const GridTitle = styled.h2`
  height: 18px;
  margin: 0;
  background: linear-gradient(#92a6de, #7289c8 35%, #465a98);
  color: #fff;
  font-size: 13px;
  line-height: 18px;
  text-align: center;
`;

const GridBody = styled.div`
  display: flex;
  align-items: stretch;
  ${({ $h }) => $h && `min-height: ${$h}px;`}
`;

const Table = styled.table`
  flex: 1;
  align-self: flex-start;
  min-width: 0;
  width: 100%;
  table-layout: fixed;
  border-collapse: collapse;

  th {
    height: 15px;
    padding: 0;
    background: linear-gradient(#5b6b8c, #5b6b8c) no-repeat right center / 1px 11px, #dfe9f5;
    box-shadow: inset 0 -1px 0 #7d8798;
    font-size: 12px;
    line-height: 15px;
  }

  th:last-child {
    background: #dfe9f5;
  }
`;

const Col = styled.col`
  width: ${({ $w }) => $w}px;
`;

const Row = styled.tr`
  color: ${({ $color }) => $color || "#111"};
  background: #fff;

  td {
    padding: ${({ $tall }) => ($tall ? 0 : 1)}px 0 0 1px;
    vertical-align: top;
    box-shadow: inset -1px 0 0 #d3d3d3,
      inset 0 -1px 0 ${({ $last, $end }) => ($last ? "#000" : $end ? "#777" : "#d3d3d3")};
    line-height: 13px;
  }
`;

const CutCell = styled.td`
  height: ${({ $h }) => $h}px;

  && {
    padding-top: 0;
    vertical-align: bottom;
  }
`;

const Clip = styled.div`
  display: flex;
  align-items: flex-end;
  height: 8px;
  overflow: hidden;
`;

const BreakCell = styled.td`
  && {
    padding-right: 6px;
  }
  word-break: break-all;
`;

const CenterCell = styled.td`
  text-align: center;
`;

const MoneyCell = styled.td`
  && {
    padding-right: 2px;
    text-align: right;
  }
`;

const Line = styled.div`
  min-height: 13px;
  white-space: pre;
`;

const ScrollTrack = styled.div`
  display: flex;
  flex-direction: column;
  align-items: center;
  justify-content: space-between;
  width: 18px;
  flex: none;
  padding: 21px 0 4px;
  background: linear-gradient(#dfe9f5, #dfe9f5) no-repeat top / 100% 15px, #f0f0f0;
`;

const Thumb = styled.div`
  width: 2px;
  height: 18px;
  margin: auto 0 12px;
  background: #8a8a8a;
`;

const BottomScroll = styled.div`
  display: flex;
  align-items: center;
  height: 17px;
  padding-left: 4px;
  border-top: 1px solid #8a8a8a;
  background: #f0f0f0;
`;

const Splitter = styled.div`
  height: 5px;
  background: #bfc2ca;
`;

const NoteColumn = styled.aside`
  flex: 1;
  padding: 1px 0 0 2px;
`;

const NotePanel = styled.div`
  display: flex;
  flex-direction: column;
  width: 185px;
  padding: 2px 2px 2px 1px;
  border: 1px solid #b5b5b5;

  label {
    padding-left: 2px;
    font-size: 14px;
    font-weight: 700;
    line-height: 20px;
  }

  textarea {
    height: 200px;
    border: 1px solid #b5b5b5;
    border-top: 2px solid #777;
    background: #fff;
    resize: none;
  }
`;

const TaskPanel = styled.section`
  padding-top: 5px;
  border-top: 1px solid #5a6068;
  background: #fcfdff;
`;

const FilterRow = styled.form`
  display: flex;
  align-items: center;
  height: 27px;
  padding-left: 12px;
  border-top: 1px solid #6c7a89;
  border-bottom: 1px solid #4f6672;

  input {
    width: 130px;
    height: 20px;
    margin: 0 4px;
    border: 1px solid #e3e3e3;
    border-bottom-color: #8a8a8a;
    border-radius: 2px;
    background: #fff;
  }
`;

const RoundButton = styled.button`
  display: flex;
  align-items: center;
  justify-content: center;
  border: 1px solid #1f4e79;
  border-radius: 4px;
  background: linear-gradient(#fff, #f2f6fa 60%, #dfe8f0);
`;

const ClearButton = styled(RoundButton)`
  width: 50px;
  height: 20px;
`;

const Dialog = styled.div`
  position: absolute;
  top: 217px;
  left: 423px;
  right: 424px;
  border-radius: 8px;
  background: #fcfdff;
  box-shadow: 0 0 2px rgba(0, 0, 0, 0.5), 0 24px 36px rgba(0, 0, 0, 0.36);
  overflow: hidden;
`;

const DialogBar = styled.div`
  display: flex;
  align-items: center;
  height: 25px;
  padding: 0 4px 0 7px;
  background: #425e9a;
  color: #fff;
`;

const DialogTitle = styled.span`
  flex: 1;
  margin-left: 10px;
`;

const DialogTop = styled.div`
  display: flex;
  min-height: 99px;
  padding: 10px 5px 0 15px;
`;

const Intro = styled.p`
  width: 411px;
  flex: none;
  margin: 0;
  white-space: nowrap;
`;

const FifoText = styled.p`
  margin: 1px 0 0;
  white-space: nowrap;
`;

const Options = styled.div`
  flex: 1;
  padding-top: 2px;
`;

const DateRow = styled.div`
  display: flex;
  align-items: center;
  gap: 9px;
  height: 20px;
  padding: 0 2px 0 22px;
`;

const DateBox = styled.div`
  display: flex;
  align-items: center;
  width: 112px;
  height: 20px;
  padding-right: 5px;
  border: 1px solid #8a8a8a;
  background: #fff;

  input {
    flex: 1;
    min-width: 0;
    padding: 0 0 0 1px;
    border: 0;
    background: none;
  }
`;

const Breakdown = styled.label`
  display: flex;
  align-items: center;
  gap: 5px;
  margin-left: auto;

  input {
    appearance: none;
    width: 13px;
    height: 13px;
    margin: 0;
    border: 1px solid #222;
    background: #fff;
  }
`;

const ActionRow = styled.div`
  display: flex;
  align-items: flex-start;
  justify-content: space-between;
  padding-top: 8px;
`;

const TransferButton = styled(RoundButton)`
  gap: 12px;
  width: 94px;
  height: 24px;
  margin-top: 31px;
  padding-right: 4px;
  border: 2px solid #2b608f;
`;

const FifoBox = styled.div`
  display: flex;
  align-items: flex-start;
  gap: 2px;
  width: 429px;
  height: 51px;
  padding: 2px 1px;
  border: 1px solid #c3c8d0;
  border-radius: 4px;
`;

const FifoButton = styled(RoundButton)`
  flex: none;
  width: 92px;
  height: 24px;
`;

const DialogGrids = styled.div`
  display: flex;
  gap: 7px;
  padding: 0 12px 12px;
`;

const TaskbarWrap = styled.footer`
  display: flex;
  align-items: center;
  height: 48px;
  background: #cbebf6;
`;

const Apps = styled.div`
  flex: 1;
  display: flex;
  justify-content: center;
  gap: 6px;
  padding-left: 194px;
`;

const AppButton = styled.button`
  position: relative;
  display: flex;
  align-items: center;
  justify-content: center;
  width: 38px;
  height: 38px;
  border-radius: 4px;
  background: ${({ $active }) => ($active ? "#eef8fc" : "none")};

  &::after {
    content: "";
    display: ${({ $open }) => ($open ? "block" : "none")};
    position: absolute;
    bottom: 0;
    width: ${({ $active }) => ($active ? 16 : 6)}px;
    height: 3px;
    border-radius: 2px;
    background: ${({ $active }) => ($active ? "#1673bd" : "#7c8a92")};
  }
`;

const Badge = styled.span`
  position: absolute;
  top: 2px;
  right: 2px;
  width: 14px;
  height: 14px;
  border-radius: 50%;
  background: ${({ $color }) => $color};
  color: #fff;
  font-size: 10px;
  line-height: 14px;
`;

const Tray = styled.div`
  display: flex;
  align-items: center;
  justify-content: flex-end;
  width: 192px;
  padding-right: 19px;
`;

const TrayIcons = styled.div`
  display: flex;
  align-items: center;
  gap: 8px;
  margin: 0 15px 0 18px;
`;

const Clock = styled.time`
  font-family: "Open Sans", "Noto Sans", sans-serif;
  font-size: 12px;
  line-height: 16px;
  text-align: right;
`;

export default App;
